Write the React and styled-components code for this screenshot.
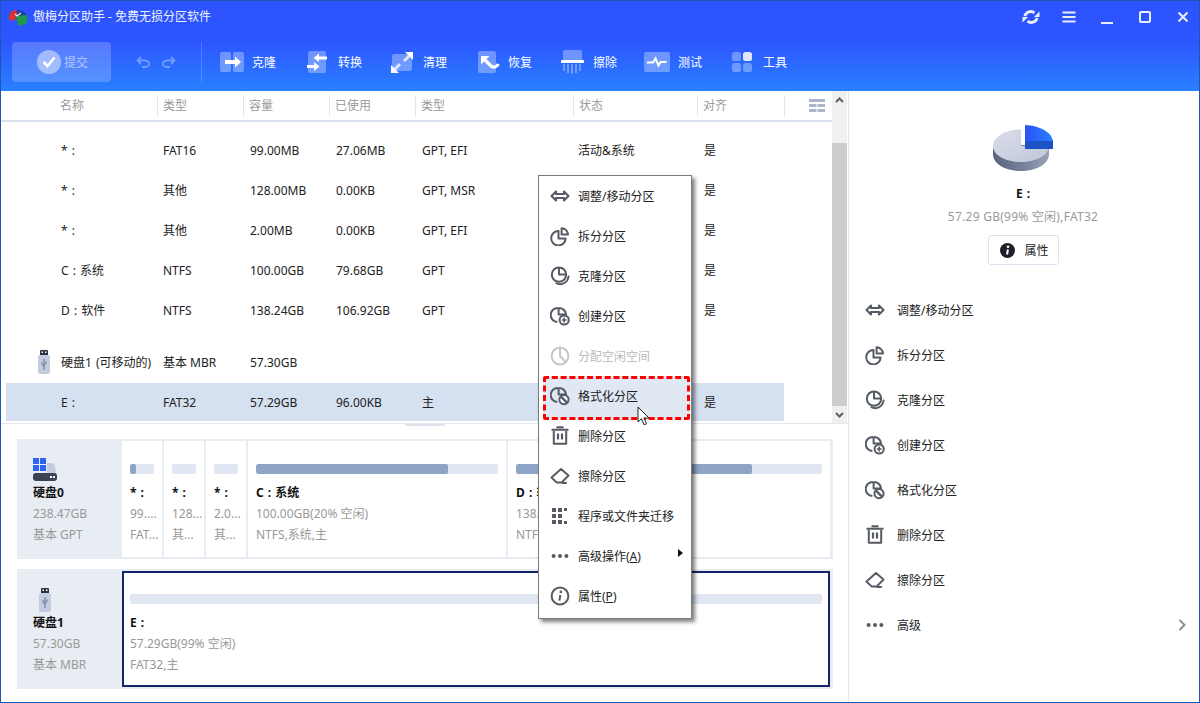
import styled, { createGlobalStyle } from "styled-components";

const GlobalStyle = createGlobalStyle`
  html, body {
    margin: 0;
    padding: 0;
    background: #fff;
  }
  body {
    font-family: "Noto Sans", "Noto Sans CJK SC", sans-serif;
    font-size: 12px;
    color: #222;
  }
`;

const columns = "151px 86px 86px 86px 158px 124px 87px";

const ICON_COLOR = "#555a64";

function Svg({ children, size = 20, color = ICON_COLOR }) {
  return (
    <svg
      width={size}
      height={size}
      viewBox="0 0 20 20"
      fill="none"
      stroke={color}
      strokeWidth="2"
      strokeLinejoin="round"
    >
      {children}
    </svg>
  );
}

const ResizeIcon = () => (
  <Svg>
    <path strokeWidth="2.1" d="M1.5 10 6 5.6V8h8V5.6L18.5 10 14 14.4V12H6v2.4Z" />
  </Svg>
);
const SplitIcon = () => (
  <Svg>
    <path d="M8.5 5A7.2 7.2 0 1 0 15.6 12.4H8.5Z" />
    <path d="M11.6 2.2A6.6 6.6 0 0 1 18 8.6h-6.4Z" />
  </Svg>
);
const CloneIcon = () => (
  <Svg>
    <circle cx="9" cy="8.6" r="7.2" />
    <path d="M9 1.6v7h7" />
    <path strokeLinecap="round" d="M18.6 10.4c-.6 4.6-4 7.8-8.4 7.8-1.6 0-2.8-.4-3.8-1" />
  </Svg>
);
const CreateIcon = () => (
  <Svg>
    <path d="M8 2A7 7 0 0 0 7.4 16M8.6 2v6.6H16V8.2A7 7 0 0 0 8.6 2" />
    <circle cx="14.2" cy="14" r="4.6" fill="#fff" />
    <path strokeWidth="1.6" d="M14.2 11.6v4.8M11.8 14h4.8" />
  </Svg>
);
const AllocateIcon = ({ color }) => (
  <Svg color={color}>
    <circle cx="10" cy="10" r="8.4" />
    <path d="M10 1.8V10l5.6 6" />
  </Svg>
);
const FormatIcon = () => (
  <Svg>
    <path d="M8 2A7 7 0 0 0 7.4 16M8.6 2v6.6H16V8.2A7 7 0 0 0 8.6 2" />
    <circle cx="14" cy="13.6" r="4.6" fill="#fff" />
    <path strokeWidth="2.2" d="M11 10.6l6 6" />
  </Svg>
);
const TrashIcon = () => (
  <Svg>
    <path d="M1.500 3.800h17M6.500 1.300h7" />
    <path d="M3.800 5v12.800h12.400V5" />
    <path strokeWidth="2.200" d="M8 7.500v6M12 7.500v6" />
  </Svg>
);
const EraserIcon = () => (
  <Svg>
    <path d="M1.500 11.500 11 3 18.500 9.500 11.800 16.400H6.500Z" />
    <path d="M11.800 17h5" />
  </Svg>
);
const MigrateIcon = () => (
  <Svg>
    <g fill={ICON_COLOR} stroke="none">
      <rect x="2" y="2" width="4" height="4" />
      <rect x="8" y="2" width="4" height="4" />
      <rect x="14" y="2" width="3" height="3" />
      <rect x="2" y="8" width="4" height="4" />
      <rect x="8" y="8" width="4" height="4" />
      <rect x="2" y="14" width="4" height="4" />
      <rect x="8" y="14" width="4" height="4" />
      <rect x="14" y="15" width="3" height="3" />
    </g>
  </Svg>
);
const MoreIcon = () => (
  <Svg>
    <g fill={ICON_COLOR} stroke="none">
      <circle cx="3.6" cy="10" r="2" />
      <circle cx="10" cy="10" r="2" />
      <circle cx="16.4" cy="10" r="2" />
    </g>
  </Svg>
);
const InfoIcon = () => (
  <Svg>
    <circle cx="10" cy="10" r="8.4" />
    <circle cx="10.8" cy="5.9" r="1.3" fill={ICON_COLOR} stroke="none" />
    <path strokeWidth="2" d="M10.4 9l-1 5.6" />
  </Svg>
);

function Pie() {
  return (
    <svg width="60" height="47" viewBox="0 0 60 47">
      <defs>
        <linearGradient id="pieTop" x1="0" y1="0" x2="1" y2="1">
          <stop offset="0" stopColor="#d9deea" />
          <stop offset="1" stopColor="#bfc6d6" />
        </linearGradient>
        <linearGradient id="pieSide" x1="0" y1="0" x2="1" y2="0">
          <stop offset="0" stopColor="#5a6480" />
          <stop offset="0.6" stopColor="#7b849c" />
          <stop offset="1" stopColor="#9aa2b6" />
        </linearGradient>
        <linearGradient id="pieBlue" x1="0" y1="0" x2="1" y2="0">
          <stop offset="0" stopColor="#2a52f5" />
          <stop offset="1" stopColor="#2a80ff" />
        </linearGradient>
      </defs>
      <path d="M0 20v9c0 10 12.5 17 28 17s28-7 28-17v-9Z" fill="url(#pieSide)" />
      <path d="M28 4.500V21h28c0 9-12.500 16-28 16S0 30 0 21 12.500 4.500 28 4.500Z" fill="url(#pieTop)" />
      <path d="M32 0c13 .6 26 6 28 16H32Z" fill="url(#pieBlue)" />
      <path d="M32 16h28v8H32Z" fill="#1d52c4" />
    </svg>
  );
}

function Logo() {
  return (
    <svg width="20" height="20" viewBox="0 0 20 20">
      <path d="M1 12C1 6 5 3 10 3s9 3 9 8l-9 1Z" fill="#1d3fa8" />
      <path d="M1 11C1 6 4 3 8 3l2 6-5 5-4-1Z" fill="#d8332f" />
      <path d="M8 9l11-1v7c-2 3-6 4-9 3Z" fill="#1f9a4a" />
      <path d="M7 7l2 2 4-3" stroke="#d8f5dc" strokeWidth="1.2" fill="none" />
    </svg>
  );
}

function SyncIcon() {
  return (
    <svg width="18" height="18" viewBox="0 0 18 18" fill="none" stroke="#e8eeff" strokeWidth="2.800">
      <path d="M2.800 8a6.200 6.200 0 0 1 9.700-3.200" />
      <path d="M15.200 10a6.200 6.200 0 0 1-9.700 3.200" />
      <path d="M17.500 3.500v5.500h-5.500Z" fill="#e8eeff" stroke="none" />
      <path d="M.5 14.500V9h5.500Z" fill="#e8eeff" stroke="none" />
    </svg>
  );
}
function BarsIcon() {
  return (
    <svg width="14" height="12" viewBox="0 0 14 12" fill="#e8eeff">
      <rect width="13" height="2" x="0.500" y="0.500" />
      <rect width="13" height="2" x="0.500" y="5" />
      <rect width="13" height="2" x="0.500" y="9.500" />
    </svg>
  );
}
function MinIcon() {
  return (
    <svg width="14" height="14" viewBox="0 0 14 14" fill="#e8eeff">
      <rect x="1" y="12" width="12" height="2" />
    </svg>
  );
}
function MaxIcon() {
  return (
    <svg width="14" height="14" viewBox="0 0 14 14" fill="none" stroke="#e8eeff" strokeWidth="2">
      <rect x="2" y="2" width="10" height="10" rx="1" />
    </svg>
  );
}
function CloseIcon() {
  return (
    <svg width="14" height="14" viewBox="0 0 14 14" fill="none" stroke="#e8eeff" strokeWidth="2">
      <path d="M2.500 2.500l9 9M11.500 2.500l-9 9" />
    </svg>
  );
}

const SOFT = "rgba(255,255,255,0.32)";

const ToolSvg = ({ w, h = 24, children }) => (
  <svg width={w} height={h} viewBox={`0 0 ${w} ${h}`}>
    {children}
  </svg>
);

const CloneTool = () => (
  <ToolSvg w={24}>
    <rect x="0" y="2" width="11" height="20" rx="2" fill={SOFT} />
    <rect x="13" y="2" width="11" height="20" rx="2" fill={SOFT} />
    <path d="M5 10h10V6.500l6 5.500-6 5.500V14H5Z" fill="#fff" />
  </ToolSvg>
);
const ConvertTool = () => (
  <ToolSvg w={23}>
    <rect x="1" y="1" width="18" height="22" rx="2" fill={SOFT} />
    <path d="M20 6.500h-8V3.500L6.500 8 12 12V9.500h8Z" fill="#fff" />
    <path d="M0 15h7v-3l5.500 4.500L7 21v-3H0Z" fill="#fff" />
  </ToolSvg>
);
const CleanTool = () => (
  <ToolSvg w={24}>
    <rect x="1" y="4" width="20" height="17" rx="2" fill={SOFT} />
    <path d="M22 2v8l-8-8Z" fill="#fff" />
    <path d="M0 23v-8l8 8Z" fill="#fff" />
    <path d="M18 6l-5 5M4 19l5-5" stroke="#fff" strokeWidth="3" opacity="0.75" />
  </ToolSvg>
);
const RecoverTool = () => (
  <ToolSvg w={22}>
    <rect x="0" y="1" width="18" height="22" rx="2" fill={SOFT} />
    <path d="M3 6h8.500L3 14.500Z" fill="#fff" />
    <path d="M6 9l6.500 6.500c2.500 2.500 6 2 8-1.500" fill="none" stroke="#fff" strokeWidth="3.200" />
  </ToolSvg>
);
const WipeTool = () => (
  <ToolSvg w={25}>
    <path d="M3 2a2 2 0 0 1 2-2h15a2 2 0 0 1 2 2v8H3Z" fill={SOFT} />
    <rect x="1" y="10" width="23" height="3" rx="1" fill="#fff" />
    <g fill={SOFT}>
      <rect x="3" y="14" width="2" height="7" />
      <rect x="7" y="14" width="2" height="9" />
      <rect x="11" y="14" width="2" height="10" />
      <rect x="15" y="14" width="2" height="9" />
      <rect x="19" y="14" width="2" height="7" />
    </g>
  </ToolSvg>
);
const TestTool = () => (
  <ToolSvg w={26}>
    <rect x="0" y="2" width="26" height="20" rx="2" fill={SOFT} />
    <path d="M3 12.500h6l2.500-4 3 7 2-3.500h6" fill="none" stroke="#fff" strokeWidth="2" />
  </ToolSvg>
);
const ToolsTool = () => (
  <ToolSvg w={23}>
    <rect x="0" y="2" width="9" height="9" rx="2.500" fill={SOFT} />
    <rect x="11" y="2" width="9" height="9" rx="2.500" fill="rgba(255,255,255,0.85)" />
    <rect x="0" y="13" width="9" height="9" rx="2.500" fill={SOFT} />
    <rect x="11" y="13" width="9" height="9" rx="2.500" fill={SOFT} />
  </ToolSvg>
);

function UsbIcon() {
  return (
    <svg width="24" height="24" viewBox="0 0 24 24">
      <rect x="8" y="0" width="8" height="6" rx="1" fill="#2c3344" />
      <rect x="9.500" y="1.500" width="1.500" height="1.500" fill="#fff" />
      <rect x="13" y="1.500" width="1.500" height="1.500" fill="#fff" />
      <rect x="6" y="5" width="12" height="19" rx="2" fill="#c3cbdf" />
      <path d="M12 9v11M10 12v2.500l2 1.500M14 11.500v2l-2 1.500" stroke="#6a7490" strokeWidth="1" fill="none" />
    </svg>
  );
}

function DiskIcon() {
  return (
    <svg width="24" height="24" viewBox="0 0 24 24">
      <path d="M14 5h5c1.500 0 2 1 3 4l2 10H0l.500-4H14Z" fill="#c5ccdc" />
      <path d="M0 18a3 3 0 0 1 3-3h18a3 3 0 0 1 3 3v2a3 3 0 0 1-3 3H3a3 3 0 0 1-3-3Z" fill="#3a4356" />
      <rect x="17" y="18" width="2" height="2" fill="#fff" />
      <rect x="20" y="18" width="2" height="2" fill="#fff" />
      <g fill="#2d62f5">
        <rect x="0" y="0" width="6" height="6" />
        <rect x="7" y="0" width="6" height="6" />
        <rect x="0" y="7" width="6" height="6" />
        <rect x="7" y="7" width="6" height="6" />
      </g>
    </svg>
  );
}

function Cursor() {
  return (
    <svg width="14" height="20" viewBox="0 0 14 20">
      <path d="M1 1v15l3.500-3.200 2.600 6 2.400-1-2.600-5.800H12Z" fill="#fff" stroke="#222" strokeWidth="1" />
    </svg>
  );
}

const tools = [
  { label: "克隆", icon: <CloneTool />, w: 87, iw: 24 },
  { label: "转换", icon: <ConvertTool />, w: 84, iw: 23 },
  { label: "清理", icon: <CleanTool />, w: 87, iw: 24 },
  { label: "恢复", icon: <RecoverTool />, w: 82, iw: 22 },
  { label: "擦除", icon: <WipeTool />, w: 84, iw: 25 },
  { label: "测试", icon: <TestTool />, w: 88, iw: 26 },
  { label: "工具", icon: <ToolsTool />, w: 80, iw: 23 },
];

const headers = ["名称", "类型", "容量", "已使用", "类型", "状态", "对齐"];

const rows = [
  ["* :", "FAT16", "99.00MB", "27.06MB", "GPT, EFI", "活动&系统", "是"],
  ["* :", "其他", "128.00MB", "0.00KB", "GPT, MSR", "", "是"],
  ["* :", "其他", "2.00MB", "0.00KB", "GPT, EFI", "", "是"],
  ["C : 系统", "NTFS", "100.00GB", "79.68GB", "GPT", "", "是"],
  ["D : 软件", "NTFS", "138.24GB", "106.92GB", "GPT", "", "是"],
];

const menuItems = [
  { label: "调整/移动分区", icon: <ResizeIcon /> },
  { label: "拆分分区", icon: <SplitIcon /> },
  { label: "克隆分区", icon: <CloneIcon /> },
  { label: "创建分区", icon: <CreateIcon /> },
  { label: "分配空闲空间", icon: <AllocateIcon color="#c2c6cd" />, disabled: true },
  { label: "格式化分区", icon: <FormatIcon />, active: true },
  { label: "删除分区", icon: <TrashIcon /> },
  { label: "擦除分区", icon: <EraserIcon /> },
  { label: "程序或文件夹迁移", icon: <MigrateIcon /> },
  { label: <>高级操作(<u>A</u>)</>, icon: <MoreIcon />, submenu: true },
  { label: <>属性(<u>P</u>)</>, icon: <InfoIcon /> },
];

const sideItems = [
  { label: "调整/移动分区", icon: <ResizeIcon /> },
  { label: "拆分分区", icon: <SplitIcon /> },
  { label: "克隆分区", icon: <CloneIcon /> },
  { label: "创建分区", icon: <CreateIcon /> },
  { label: "格式化分区", icon: <FormatIcon /> },
  { label: "删除分区", icon: <TrashIcon /> },
  { label: "擦除分区", icon: <EraserIcon /> },
  { label: "高级", icon: <MoreIcon />, more: true },
];

const disk0Parts = [
  { w: 40, used: 6, total: 24, name: "* :", size: "99....", info: "FAT..." },
  { w: 40, used: 0, total: 24, name: "* :", size: "128...", info: "其..." },
  { w: 40, used: 0, total: 24, name: "* :", size: "2.0...", info: "其..." },
  { w: 258, used: 192, total: 242, name: "C : 系统", size: "100.00GB(20% 空闲)", info: "NTFS,系统,主" },
  { w: 322, used: 236, total: 306, name: "D : 软件", size: "138.24GB(22% 空闲)", info: "NTFS,主" },
];

function App() {
  return (
    <>
      <GlobalStyle />
      <Window>
        <Header>
          <TitleBar>
            <Logo />
            <TitleText>傲梅分区助手 - 免费无损分区软件</TitleText>
            <WinControls>
              <WinButton><SyncIcon /></WinButton>
              <WinButton><BarsIcon /></WinButton>
              <WinButton><MinIcon /></WinButton>
              <WinButton><MaxIcon /></WinButton>
              <WinButton><CloseIcon /></WinButton>
            </WinControls>
          </TitleBar>
          <Toolbar>
            <SubmitButton>
              <SubmitCheck>
                <svg width="14" height="12" viewBox="0 0 14 12" fill="none" stroke="#fff" strokeWidth="2.600">
                  <path d="M1.500 6l4 4 7-8.500" />
                </svg>
              </SubmitCheck>
              提交
            </SubmitButton>
            <HistoryGroup>
              <svg width="14" height="12" viewBox="0 0 14 12" fill="none" stroke="#6f9cff" strokeWidth="1.800">
                <path d="M5 1L1.500 4.500 5 8M1.500 4.500H9a4 3.200 0 0 1 0 6.500H6" />
              </svg>
              <svg width="14" height="12" viewBox="0 0 14 12" fill="none" stroke="#6f9cff" strokeWidth="1.800">
                <path d="M9 1l3.500 3.500L9 8M12.500 4.500H5a4 3.200 0 0 0 0 6.500h3" />
              </svg>
            </HistoryGroup>
            <ToolDivider />
            {tools.map((t) => (
              <ToolItem key={t.label} $w={t.w}>
                <ToolIconBox $w={t.iw}>{t.icon}</ToolIconBox>
                {t.label}
              </ToolItem>
            ))}
          </Toolbar>
        </Header>
        <Body>
          <LeftPane>
            <TableArea>
              <TableMain>
                <HeaderRow>
                  {headers.map((h, i) => (
                    <HeaderCell key={i} $first={i === 0}>{h}</HeaderCell>
                  ))}
                  <HeaderCell $last>
                    <svg width="16" height="13" viewBox="0 0 16 13" fill="#aab5c8">
                      <rect width="16" height="3" />
                      <rect y="5" width="7.500" height="3" />
                      <rect x="8.500" y="5" width="7.500" height="3" />
                      <rect y="10" width="7.500" height="3" />
                      <rect x="8.500" y="10" width="7.500" height="3" />
                    </svg>
                  </HeaderCell>
                </HeaderRow>
                <TableBody>
                  {rows.map((r, i) => (
                    <Row key={i}>
                      {r.map((c, j) => (
                        <Cell key={j} $first={j === 0}>{c}</Cell>
                      ))}
                    </Row>
                  ))}
                  <DiskRow>
                    <DiskCell>
                      <SmallUsb><UsbIcon /></SmallUsb>
                      硬盘1 (可移动的)
                    </DiskCell>
                    <Cell>基本 MBR</Cell>
                    <Cell>57.30GB</Cell>
                  </DiskRow>
                  <Row $selected>
                    <Cell $first>E :</Cell>
                    <Cell>FAT32</Cell>
                    <Cell>57.29GB</Cell>
                    <Cell>96.00KB</Cell>
                    <Cell>主</Cell>
                    <Cell />
                    <Cell>是</Cell>
                  </Row>
                </TableBody>
              </TableMain>
              <ScrollBar>
                <ScrollArrow>
                  <svg width="9" height="6" viewBox="0 0 9 6" fill="none" stroke="#606060" strokeWidth="2">
                    <path d="M1 5l3.500-3.500L8 5" />
                  </svg>
                </ScrollArrow>
                <ScrollThumb />
                <ScrollArrow>
                  <svg width="9" height="6" viewBox="0 0 9 6" fill="none" stroke="#606060" strokeWidth="2">
                    <path d="M1 1l3.500 3.500L8 1" />
                  </svg>
                </ScrollArrow>
              </ScrollBar>
            </TableArea>
            <DiskArea>
              <DiskCard>
                <DiskInfo>
                  <DiskIconBox><DiskIcon /></DiskIconBox>
                  <StrongLine>硬盘0</StrongLine>
                  <GreyLine>238.47GB</GreyLine>
                  <GreyLine>基本 GPT</GreyLine>
                </DiskInfo>
                {disk0Parts.map((p, i) => (
                  <PartCell key={i} $w={p.w}>
                    <Bar>
                      <BarFill style={{ width: `${(p.used / p.total) * 100}%` }} />
                    </Bar>
                    <StrongLine>{p.name}</StrongLine>
                    <GreyLine>{p.size}</GreyLine>
                    <GreyLine>{p.info}</GreyLine>
                  </PartCell>
                ))}
              </DiskCard>
              <DiskCard>
                <DiskInfo>
                  <DiskIconBox><UsbIcon /></DiskIconBox>
                  <StrongLine>硬盘1</StrongLine>
                  <GreyLine>57.30GB</GreyLine>
                  <GreyLine>基本 MBR</GreyLine>
                </DiskInfo>
                <PartCell $w={708} $selected>
                  <Bar />
                  <StrongLine>E :</StrongLine>
                  <GreyLine>57.29GB(99% 空闲)</GreyLine>
                  <GreyLine>FAT32,主</GreyLine>
                </PartCell>
              </DiskCard>
            </DiskArea>
          </LeftPane>
          <SidePanel>
            <Pie />
            <SideName>E :</SideName>
            <SideSub>57.29 GB(99% 空闲),FAT32</SideSub>
            <PropButton>
              <svg width="15" height="15" viewBox="0 0 15 15">
                <circle cx="7.500" cy="7.500" r="7.500" fill="#1d2027" />
                <circle cx="8" cy="3.800" r="1.300" fill="#fff" />
                <path d="M7.900 6.500l-.8 5" stroke="#fff" strokeWidth="2" />
              </svg>
              属性
            </PropButton>
            <SideList>
              {sideItems.map((s) => (
                <SideItem key={s.label}>
                  {s.icon}
                  {s.label}
                  {s.more && (
                    <SideChevron>
                      <svg width="8" height="12" viewBox="0 0 8 12" fill="none" stroke="#8a909c" strokeWidth="2">
                        <path d="M1.500 1l5 5-5 5" />
                      </svg>
                    </SideChevron>
                  )}
                </SideItem>
              ))}
            </SideList>
          </SidePanel>
        </Body>
        <ContextMenu>
          {menuItems.map((m, i) => (
            <MenuItem key={i} $active={m.active} $disabled={m.disabled}>
              {m.icon}
              <MenuLabel>{m.label}</MenuLabel>
              {m.submenu && <SubArrow />}
              {m.active && <PointerSpot><Cursor /></PointerSpot>}
            </MenuItem>
          ))}
        </ContextMenu>
      </Window>
    </>
  );
}

const Window = styled.div`
  position: relative;
  box-sizing: border-box;
  width: 1200px;
  height: 703px;
  border: 1px solid #1c57b5;
  overflow: hidden;
  display: flex;
  flex-direction: column;
  background: #fff;
`;

const Header = styled.header`
  height: 90px;
  flex: none;
  background: linear-gradient(180deg, #2d53ff 0%, #2d56ff 45%, #2a80ff 100%);
  color: #fff;
`;

const TitleBar = styled.div`
  height: 31px;
  display: flex;
  align-items: center;
  padding-left: 7px;
  gap: 5px;
`;

const TitleText = styled.span`
  color: #eef2ff;
  line-height: 30px;
`;

const WinControls = styled.div`
  margin-left: auto;
  margin-right: -3px;
  display: flex;
`;

const WinButton = styled.div`
  width: 38px;
  height: 31px;
  display: flex;
  align-items: center;
  justify-content: center;
`;

const Toolbar = styled.div`
  height: 40px;
  margin-top: 10px;
  padding-left: 11px;
  display: flex;
  align-items: center;
`;

const SubmitButton = styled.div`
  width: 99px;
  height: 40px;
  box-sizing: border-box;
  padding-left: 25px;
  display: flex;
  align-items: center;
  gap: 3px;
  border-radius: 4px;
  background: rgba(255, 255, 255, 0.2);
  color: rgba(255, 255, 255, 0.55);
`;

const SubmitCheck = styled.span`
  width: 24px;
  height: 24px;
  border-radius: 50%;
  background: rgba(255, 255, 255, 0.45);
  display: flex;
  align-items: center;
  justify-content: center;
`;

const HistoryGroup = styled.div`
  margin-left: 25px;
  width: 65px;
  display: flex;
  gap: 12px;
`;

const ToolDivider = styled.div`
  width: 1px;
  height: 40px;
  margin-right: 18px;
  background: rgba(255, 255, 255, 0.18);
`;

const ToolItem = styled.div`
  width: ${(p) => p.$w}px;
  flex: none;
  display: flex;
  align-items: center;
  gap: 8px;
  color: #fff;
`;

const ToolIconBox = styled.div`
  width: ${(p) => p.$w}px;
  height: 24px;
`;

const Body = styled.div`
  flex: 1;
  display: flex;
  min-height: 0;
`;

const LeftPane = styled.div`
  width: 847px;
  flex: none;
  display: flex;
  flex-direction: column;
`;

const TableArea = styled.div`
  position: relative;
  height: 332px;
  flex: none;
  display: flex;
  border-bottom: 1px solid #e3e7ee;

  &::after {
    content: "";
    position: absolute;
    left: 404px;
    bottom: -3px;
    width: 40px;
    height: 2px;
    background: #dfe4ec;
  }
`;

const TableMain = styled.div`
  width: 831px;
  flex: none;
`;

const HeaderRow = styled.div`
  height: 29px;
  padding-left: 5px;
  border-bottom: 2px solid #dbe2ee;
  display: grid;
  grid-template-columns: ${columns} 1fr;
  align-items: center;
`;

const HeaderCell = styled.div`
  box-sizing: border-box;
  height: 22px;
  line-height: 22px;
  color: #9a9a9a;
  padding-left: ${(p) => (p.$first ? "54px" : p.$last ? "24px" : "5px")};
  border-left: ${(p) => (p.$first ? "none" : "1px solid #e3e7ef")};
  display: flex;
  align-items: center;
`;

const TableBody = styled.div`
  padding: 8px 0 0 5px;
`;

const Row = styled.div`
  display: grid;
  grid-template-columns: ${columns};
  align-items: center;
  width: 778px;
  height: ${(p) => (p.$selected ? "38px" : "40px")};
  background: ${(p) => (p.$selected ? "#d5e0f0" : "transparent")};
`;

const DiskRow = styled(Row)`
  margin-top: 12px;
  margin-bottom: 1px;
`;

const Cell = styled.div`
  padding-left: ${(p) => (p.$first ? "55px" : "6px")};
  color: #222;
  white-space: nowrap;
  word-spacing: ${(p) => (p.$first ? "1px" : "0")};

  &:nth-child(n + 3) {
    padding-left: 7px;
  }
  &:nth-child(6) {
    padding-left: 5px;
  }
`;

const DiskCell = styled.div`
  padding-left: 26px;
  display: flex;
  align-items: center;
  gap: 5px;
  white-space: nowrap;
  word-spacing: 1px;
`;

const SmallUsb = styled.span`
  width: 24px;
  height: 24px;
  flex: none;
`;

const ScrollBar = styled.div`
  width: 15px;
  flex: none;
  display: flex;
  flex-direction: column;
  background: #f0f0f0;
`;

const ScrollArrow = styled.div`
  height: 17px;
  display: flex;
  align-items: center;
  justify-content: center;
`;

const ScrollThumb = styled.div`
  flex: 1;
  margin-top: 35px;
  background: #cdcdcd;
`;

const DiskArea = styled.div`
  flex: 1;
  padding: 15px 15px 0 16px;
  display: flex;
  flex-direction: column;
  gap: 10px;
`;

const DiskCard = styled.div`
  height: 120px;
  box-sizing: border-box;
  padding: 2px 2px 2px 0;
  display: flex;
  gap: 2px;
  background: #e8ecf3;
`;

const DiskInfo = styled.div`
  width: 103px;
  flex: none;
  padding: 17px 0 0 16px;
  box-sizing: border-box;
`;

const DiskIconBox = styled.div`
  width: 24px;
  height: 24px;
`;

const PartCell = styled.div`
  width: ${(p) => p.$w}px;
  flex: none;
  box-sizing: border-box;
  padding: 23px 8px 0;
  background: #fff;
  box-shadow: ${(p) => (p.$selected ? "inset 0 0 0 2px #14246a" : "none")};
`;

const Bar = styled.div`
  height: 10px;
  margin-bottom: 8px;
  border-radius: 2px;
  background: #e1e7f2;
  overflow: hidden;
`;

const BarFill = styled.div`
  height: 100%;
  background: #8fa5c5;
  border-radius: 2px;
`;

const StrongLine = styled.div`
  line-height: 21px;
  font-weight: 700;
  color: #111;
  white-space: nowrap;
  word-spacing: 1px;
`;

const GreyLine = styled.div`
  line-height: 21px;
  color: #999;
  white-space: nowrap;
`;

const SidePanel = styled.aside`
  flex: 1;
  border-left: 1px solid #e0e6f0;
  padding: 34px 2px 0 0;
  display: flex;
  flex-direction: column;
  align-items: center;
`;

const SideName = styled.div`
  margin-top: 12px;
  line-height: 20px;
  font-weight: 700;
  color: #111;
  word-spacing: 1px;
`;

const SideSub = styled.div`
  margin-top: 3px;
  line-height: 20px;
  color: #999;
  letter-spacing: 0.25px;
`;

const PropButton = styled.div`
  margin-top: 8px;
  width: 71px;
  height: 30px;
  box-sizing: border-box;
  padding-left: 11px;
  display: flex;
  align-items: center;
  gap: 10px;
  border: 1px solid #dde3ee;
  border-radius: 3px;
  color: #222;
`;

const SideList = styled.div`
  margin-top: 22px;
  align-self: stretch;
`;

const SideItem = styled.div`
  height: 45px;
  padding-left: 16px;
  display: flex;
  align-items: center;
  gap: 12px;
  color: #222;
`;

const SideChevron = styled.span`
  margin-left: auto;
  margin-right: 11px;
  display: flex;
`;

const ContextMenu = styled.div`
  position: absolute;
  left: 537px;
  top: 174px;
  width: 154px;
  box-sizing: border-box;
  padding-bottom: 2px;
  background: #fff;
  border: 1px solid #7c7c7c;
  box-shadow: 3px 3px 4px rgba(0, 0, 0, 0.5);
`;

const MenuItem = styled.div`
  position: relative;
  height: 40px;
  padding-left: 11px;
  display: flex;
  align-items: center;
  gap: 8px;
  white-space: nowrap;
  color: ${(p) => (p.$disabled ? "#bbb" : "#222")};

  ${(p) =>
    p.$active &&
    `
    &::before {
      content: "";
      position: absolute;
      left: 4px;
      right: 1px;
      top: 0;
      bottom: -4px;
      box-sizing: border-box;
      background: #e0e8f4;
      border: 3px dashed #f00;
      border-radius: 2px;
    }
    & > svg {
      position: relative;
    }
  `}
`;

const MenuLabel = styled.span`
  position: relative;
`;

const SubArrow = styled.span`
  position: absolute;
  right: 8px;
  top: 13px;
  border-left: 5px solid #111;
  border-top: 4px solid transparent;
  border-bottom: 4px solid transparent;
`;

const PointerSpot = styled.span`
  position: absolute;
  left: 98px;
  top: 30px;
  z-index: 2;
  line-height: 0;
`;

export default App;
